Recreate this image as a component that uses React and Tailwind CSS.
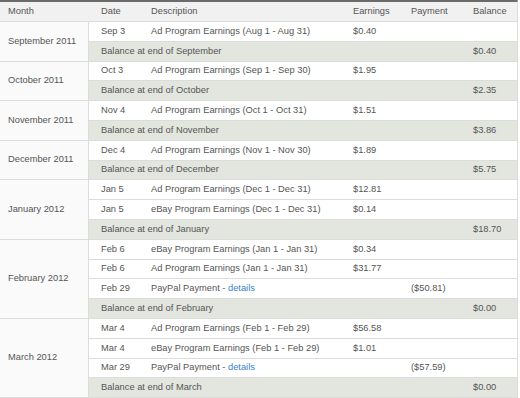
// App.jsx — monthly earnings statement table

const GROUPS = [
  {
    month: 'September 2011',
    rows: [{ date: 'Sep 3', desc: 'Ad Program Earnings (Aug 1 - Aug 31)', earn: '$0.40' }],
    end: 'September',
    balance: '$0.40',
  },
  {
    month: 'October 2011',
    rows: [{ date: 'Oct 3', desc: 'Ad Program Earnings (Sep 1 - Sep 30)', earn: '$1.95' }],
    end: 'October',
    balance: '$2.35',
  },
  {
    month: 'November 2011',
    rows: [{ date: 'Nov 4', desc: 'Ad Program Earnings (Oct 1 - Oct 31)', earn: '$1.51' }],
    end: 'November',
    balance: '$3.86',
  },
  {
    month: 'December 2011',
    rows: [{ date: 'Dec 4', desc: 'Ad Program Earnings (Nov 1 - Nov 30)', earn: '$1.89' }],
    end: 'December',
    balance: '$5.75',
  },
  {
    month: 'January 2012',
    rows: [
      { date: 'Jan 5', desc: 'Ad Program Earnings (Dec 1 - Dec 31)', earn: '$12.81' },
      { date: 'Jan 5', desc: 'eBay Program Earnings (Dec 1 - Dec 31)', earn: '$0.14' },
    ],
    end: 'January',
    balance: '$18.70',
  },
  {
    month: 'February 2012',
    rows: [
      { date: 'Feb 6', desc: 'eBay Program Earnings (Jan 1 - Jan 31)', earn: '$0.34' },
      { date: 'Feb 6', desc: 'Ad Program Earnings (Jan 1 - Jan 31)', earn: '$31.77' },
      { date: 'Feb 29', desc: 'PayPal Payment', link: true, pay: '($50.81)' },
    ],
    end: 'February',
    balance: '$0.00',
  },
  {
    month: 'March 2012',
    rows: [
      { date: 'Mar 4', desc: 'Ad Program Earnings (Feb 1 - Feb 29)', earn: '$56.58' },
      { date: 'Mar 4', desc: 'eBay Program Earnings (Feb 1 - Feb 29)', earn: '$1.01' },
      { date: 'Mar 29', desc: 'PayPal Payment', link: true, pay: '($57.59)' },
    ],
    end: 'March',
    balance: '$0.00',
  },
]

const ROW = 'flex h-[19.8px] items-center border-b border-[#dcdcdc]'

function Line({ r }) {
  return (
    <div className={`${ROW} bg-white`}>
      <div className="w-[50px] shrink-0 pl-[12px]">{r.date}</div>
      <div className="w-[202px] shrink-0 whitespace-nowrap pl-[12px]">
        {r.desc}
        {r.link && (
          <>
            {' - '}
            <span className="text-[#3b7fc9]">details</span>
          </>
        )}
      </div>
      <div className="w-[58px] shrink-0 pl-[12px]">{r.earn}</div>
      <div className="w-[62px] shrink-0 pl-[12px]">{r.pay}</div>
      <div className="flex-1 pl-[12px]" />
    </div>
  )
}

export default function App() {
  return (
    <div className="h-[398px] w-[520px] bg-white font-['Liberation_Sans',Arial,sans-serif] text-[9.3px] leading-none whitespace-nowrap text-[#555]">
      <div className="w-[518px] border-t-2 border-r border-t-[#6b6b6b] border-r-[#dcdcdc]">
        <div className="flex h-[20px] items-center border-b border-[#dcdcdc] bg-[#f1f1f1]">
          <div className="w-[89px] shrink-0 pl-[8px]">Month</div>
          <div className="w-[50px] shrink-0 pl-[12px]">Date</div>
          <div className="w-[202px] shrink-0 pl-[12px]">Description</div>
          <div className="w-[58px] shrink-0 pl-[12px]">Earnings</div>
          <div className="w-[62px] shrink-0 pl-[12px]">Payment</div>
          <div className="flex-1 pl-[12px]">Balance</div>
        </div>

        {GROUPS.map((g) => (
          <div key={g.month} className="flex">
            <div className="flex w-[89px] shrink-0 items-center border-r border-b border-[#dcdcdc] bg-[#fafafa] pl-[8px]">
              {g.month}
            </div>
            <div className="flex-1">
              {g.rows.map((r, i) => (
                <Line key={i} r={r} />
              ))}
              <div className={`${ROW} bg-[#e3e5df]`}>
                <div className="w-[372px] shrink-0 pl-[12px]">Balance at end of {g.end}</div>
                <div className="flex-1 pl-[12px]">{g.balance}</div>
              </div>
            </div>
          </div>
        ))}
      </div>
    </div>
  )
}
